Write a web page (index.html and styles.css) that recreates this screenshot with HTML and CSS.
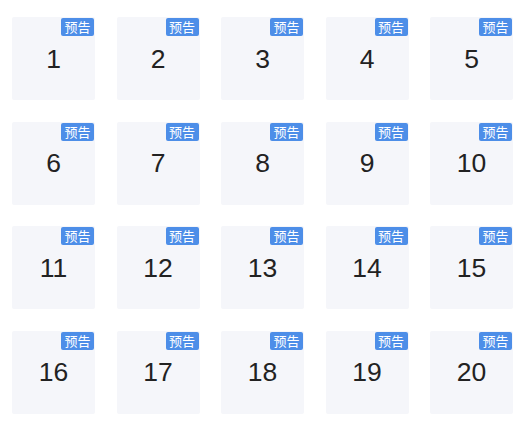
FILE: index.html
```html
<!DOCTYPE html>
<html>
<head>
<meta charset="utf-8">
<link rel="stylesheet" href="styles.css">
</head>
<body>
<div class="grid">
  <div class="card"><span class="badge">预告</span><span class="num">1</span></div>
  <div class="card"><span class="badge">预告</span><span class="num">2</span></div>
  <div class="card"><span class="badge">预告</span><span class="num">3</span></div>
  <div class="card"><span class="badge">预告</span><span class="num">4</span></div>
  <div class="card"><span class="badge">预告</span><span class="num">5</span></div>
  <div class="card"><span class="badge">预告</span><span class="num">6</span></div>
  <div class="card"><span class="badge">预告</span><span class="num">7</span></div>
  <div class="card"><span class="badge">预告</span><span class="num">8</span></div>
  <div class="card"><span class="badge">预告</span><span class="num">9</span></div>
  <div class="card"><span class="badge">预告</span><span class="num">10</span></div>
  <div class="card"><span class="badge">预告</span><span class="num">11</span></div>
  <div class="card"><span class="badge">预告</span><span class="num">12</span></div>
  <div class="card"><span class="badge">预告</span><span class="num">13</span></div>
  <div class="card"><span class="badge">预告</span><span class="num">14</span></div>
  <div class="card"><span class="badge">预告</span><span class="num">15</span></div>
  <div class="card"><span class="badge">预告</span><span class="num">16</span></div>
  <div class="card"><span class="badge">预告</span><span class="num">17</span></div>
  <div class="card"><span class="badge">预告</span><span class="num">18</span></div>
  <div class="card"><span class="badge">预告</span><span class="num">19</span></div>
  <div class="card"><span class="badge">预告</span><span class="num">20</span></div>
</div>
</body>
</html>
```
FILE: styles.css
```css
html, body {
  margin: 0;
  padding: 0;
  background: #ffffff;
}
body {
  font-family: "Liberation Sans", Arial, sans-serif;
}
.grid {
  display: grid;
  grid-template-columns: repeat(5, 83px);
  grid-auto-rows: 83px;
  column-gap: 21.5px;
  row-gap: 21.5px;
  padding: 17px 0 0 12px;
}
.card {
  position: relative;
  background: #f5f6fa;
  border-radius: 2px;
  display: flex;
  align-items: center;
  justify-content: center;
}
.num {
  font-size: 26.5px;
  color: #222222;
  line-height: 1;
  margin-top: 1px;
}
.badge {
  position: absolute;
  top: 1px;
  right: 1px;
  width: 33px;
  height: 18px;
  background: #4d8ee8;
  color: #ffffff;
  border-radius: 2px;
  font-size: 13px;
  line-height: 18px;
  text-align: center;
  font-family: "Noto Sans CJK SC", sans-serif;
}
```
